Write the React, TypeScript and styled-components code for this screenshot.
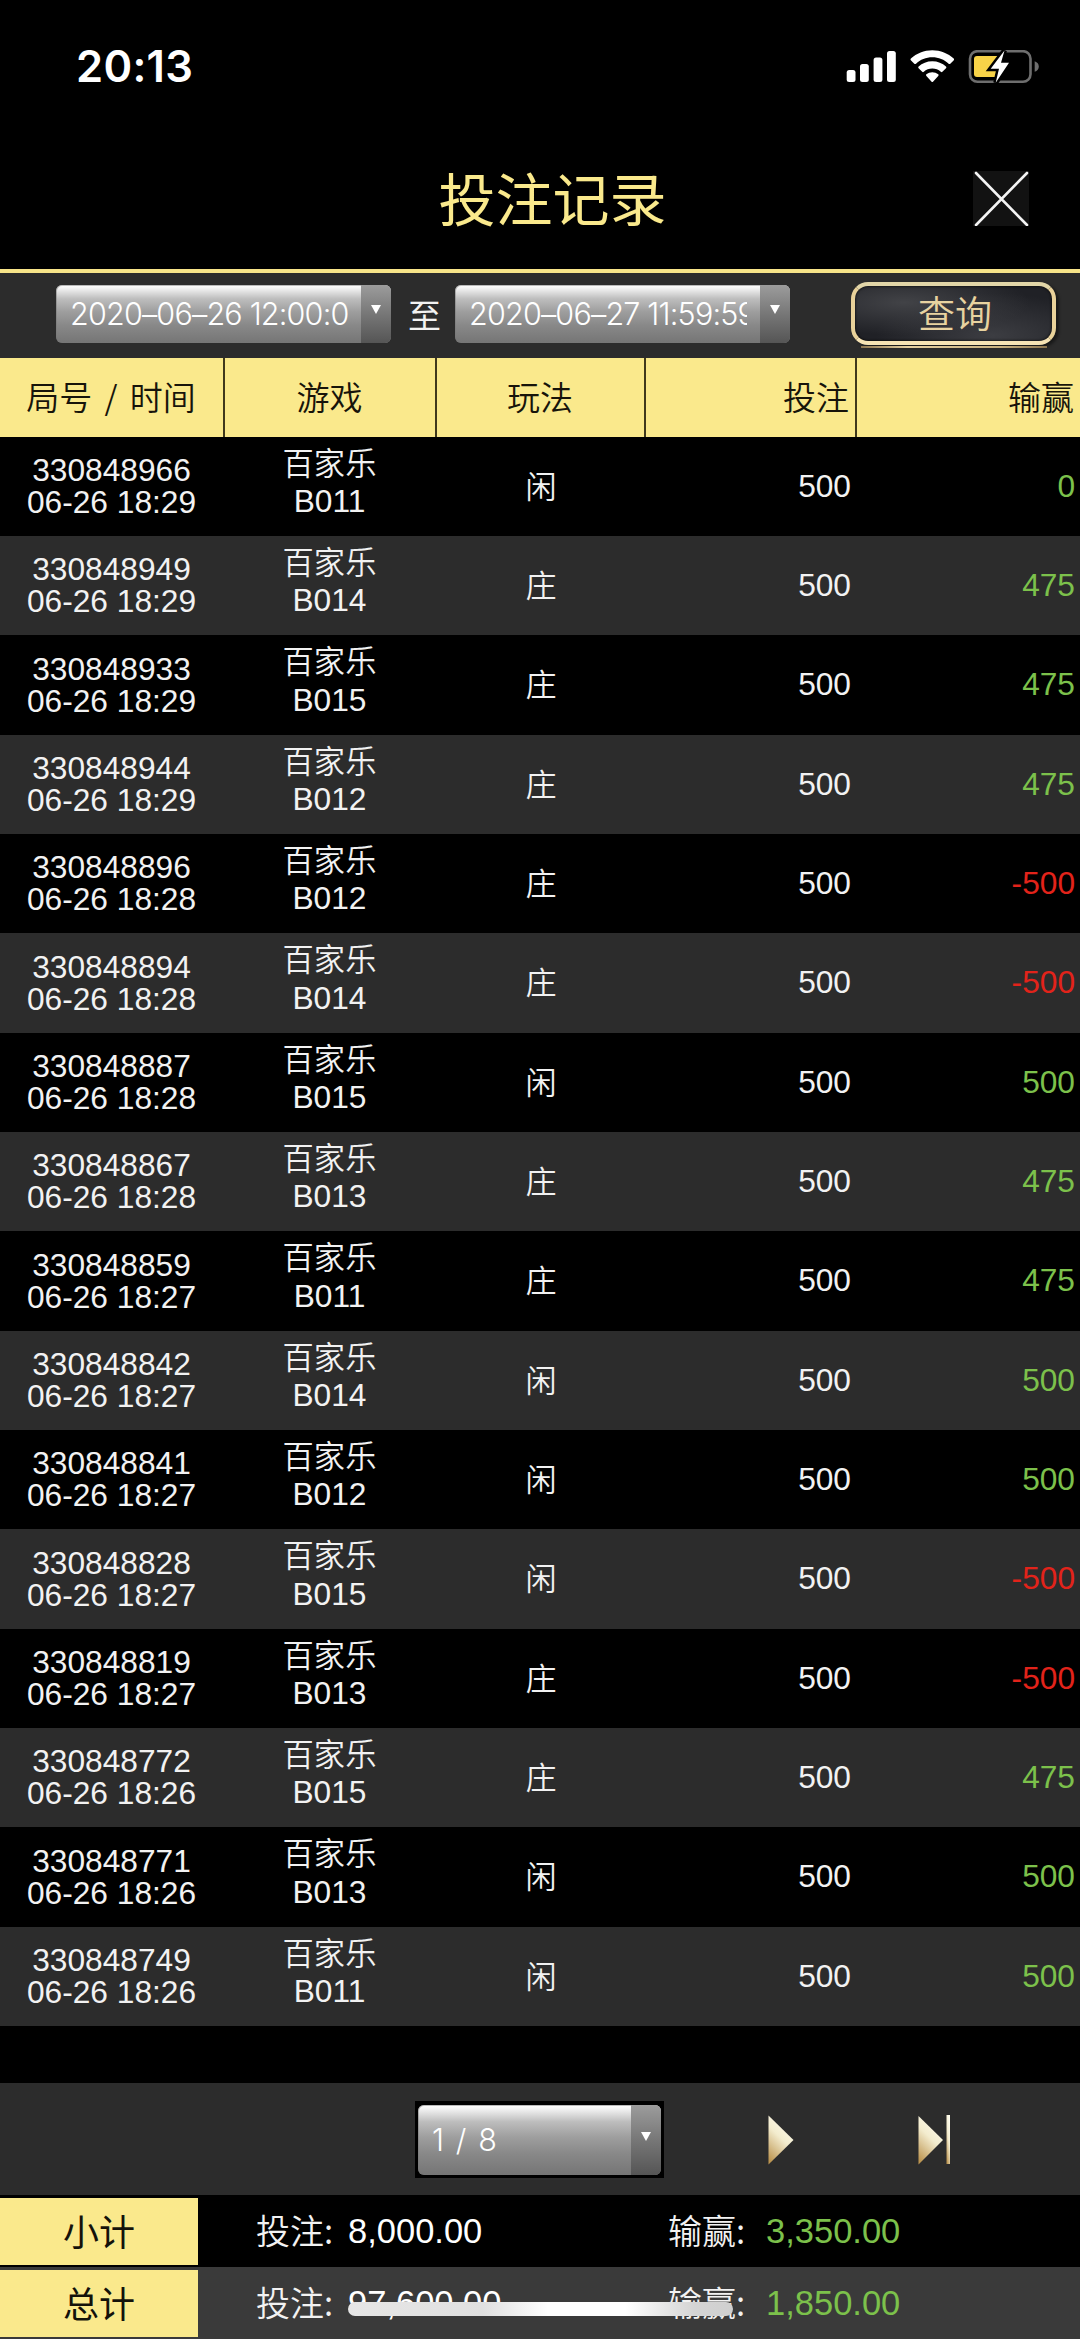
import React from "react";
import styled, { createGlobalStyle } from "styled-components";

const latin = `"Liberation Sans", "Noto Sans CJK SC", sans-serif`;
const cjk = `"Noto Sans CJK SC", "Liberation Sans", sans-serif`;
const gold = "#fae98c";

const GlobalStyle = createGlobalStyle`
  * { box-sizing: border-box; }
  body { margin: 0; background: #000; }
  button { border: 0; padding: 0; background: none; font: inherit; }
`;

const Screen = styled.main`
  position: relative;
  display: flex;
  flex-direction: column;
  width: 1080px;
  height: 2339px;
  overflow: hidden;
  background: #000;
  color: #f2f2f2;
  font-family: ${latin};
`;

const StatusBar = styled.header`
  display: flex;
  align-items: flex-start;
  justify-content: space-between;
  height: 132px;
  padding: 50px 41px 0 76px;
`;

const Clock = styled.span`
  font: 570 43.5px/32px Inter, sans-serif;
  letter-spacing: 0.3px;
  color: #fff;
`;

const StatusIcons = styled.svg`
  width: 193px;
  height: 34px;
`;

const TitleBar = styled.div`
  display: grid;
  grid-template-columns: 1fr auto 1fr;
  align-items: start;
  height: 141px;
  padding: 39px 51px 0;
  border-bottom: 4px solid #f7e489;
`;

const Title = styled.h1`
  grid-column: 2;
  margin: -5px 0 0;
  padding-left: 25px;
  font: 400 57px/60px ${cjk};
  color: ${gold};
`;

const CloseButton = styled.button`
  justify-self: end;
  width: 56px;
  height: 55px;
  background: #121212;
  svg { display: block; }
`;

const FilterBar = styled.section`
  display: flex;
  align-items: flex-start;
  height: 85px;
  padding: 9px 24px 0 56px;
  background: #2c2c2c;
`;

const Select = styled.div<{ $w: number; $h: number; $arrow: number }>`
  display: grid;
  grid-template-columns: 1fr ${(p) => p.$arrow}px;
  width: ${(p) => p.$w}px;
  height: ${(p) => p.$h}px;
  border-radius: 6px;
  overflow: hidden;
  background: linear-gradient(#fff 0%, #f4f4f4 5%, #bdbdbd 24%, #9e9e9e 46%, #888 70%, #757575 100%);
  box-shadow: inset 0 0 0 1px rgba(120, 120, 120, 0.5);
`;

const FilterSelect = styled(Select)`
  margin-top: 3px;
`;

const SelectText = styled.span<{ $clip: number; $pad: number; $spacing: number }>`
  align-self: center;
  width: ${(p) => p.$clip}px;
  margin-left: ${(p) => p.$pad}px;
  overflow: hidden;
  white-space: pre;
  font: 300 30.5px/40px Inter, sans-serif;
  letter-spacing: ${(p) => p.$spacing}px;
  color: #fff;
`;

const SelectArrow = styled.span`
  display: flex;
  justify-content: center;
  background: linear-gradient(#9c9c9c, #777 50%, #555);
  svg { width: 10px; height: 9px; }
`;

const Until = styled.span`
  width: 64px;
  margin-top: 15px;
  padding-left: 3px;
  text-align: center;
  font: 400 33px/34px ${cjk};
`;

const QueryButton = styled.button`
  width: 205px;
  height: 63px;
  padding-left: 3px;
  border: 4px solid #e9d29a;
  border-top-color: #e2d6a8;
  border-bottom-color: #f6e3b4;
  border-radius: 17px;
  background: radial-gradient(ellipse at 25% 30%, #424347, transparent 60%),
    radial-gradient(ellipse at 70% 90%, #3c3d42, transparent 60%), #202126;
  box-shadow: inset 0 0 3px #000, 3px 2px 3px rgba(0, 0, 0, 0.45);
  font: 350 37px/47px ${cjk};
  color: #e8d3a0;
  span { display: block; margin-top: -3px; }
`;

const QueryWrap = styled.div`
  display: flex;
  flex-direction: column;
  align-items: center;
  gap: 1px;
  margin-left: auto;
`;

const QueryShine = styled.span`
  width: 186px;
  height: 2px;
  background: linear-gradient(90deg, #8d7650, #e6d0a0 25%, #c9b17e 75%, #8d7650);
`;

const columns = "225px 212px 209px 211px 1fr";

const TableHead = styled.div`
  display: grid;
  grid-template-columns: ${columns};
  height: 78.5px;
  background: ${gold};
  color: #17140a;
`;

const HeadCell = styled.div<{ $align?: string; $divider?: boolean; $words?: number }>`
  padding-right: ${(p) => (p.$align ? 6 : 1)}px;
  border-right: ${(p) => (p.$divider === false ? 0 : 2)}px solid #40391c;
  text-align: ${(p) => p.$align ?? "center"};
  font: 350 33px/77px ${cjk};
  word-spacing: ${(p) => p.$words ?? 0}px;
  white-space: pre;
`;

const TableBody = styled.div`
  display: grid;
  grid-template-rows: repeat(16, minmax(0, 1fr));
  height: 1589.5px;
`;

const Row = styled.div<{ $alt: boolean }>`
  display: grid;
  grid-template-columns: ${columns};
  background: ${(p) => (p.$alt ? "#2c2c2c" : "#000")};
`;

const StackCell = styled.div`
  display: flex;
  flex-direction: column;
  align-items: center;
  padding: 17.5px 2px 0 0;
  font-size: 31.7px;
  line-height: 32px;
`;

const GameCell = styled(StackCell)`
  padding: 7px 3px 0 0;
`;

const GameName = styled.span`
  font: 350 31.3px/35px ${cjk};
  margin-bottom: 6.5px;
`;

const PlayCell = styled.div`
  padding-right: 1px;
  text-align: center;
  font: 350 31px/96px ${cjk};
`;

const Amount = styled.div<{ $color?: string }>`
  padding-right: 6px;
  text-align: right;
  font-size: 31.7px;
  line-height: 99px;
  color: ${(p) => p.$color ?? "#f2f2f2"};
`;

const WinAmount = styled(Amount)`
  padding-right: 5px;
`;

const Pager = styled.nav`
  display: flex;
  height: 112px;
  margin-top: 57px;
  padding: 18px 0 0 415px;
  background: #2c2c2c;
`;

const PagerFrame = styled.div`
  width: 249px;
  height: 77px;
  padding: 4px 3px;
  background: #000;
`;

const PagerButton = styled.button<{ $gap: number }>`
  height: 50px;
  margin: 14px 0 0 ${(p) => p.$gap}px;
  svg { display: block; }
`;

const SummaryRow = styled.section<{ $bg: string }>`
  display: flex;
  align-items: flex-start;
  height: 72px;
  padding-top: 2.5px;
  background: ${(p) => p.$bg};
`;

const SummaryTag = styled.div`
  width: 198px;
  height: 67px;
  background: ${gold};
  color: #14120a;
  text-align: center;
  font: 400 36px/64px ${cjk};
`;

const SummaryItem = styled.div<{ $w: number; $pad: number; $gap: number }>`
  display: grid;
  grid-template-columns: ${(p) => p.$gap}px 1fr;
  width: ${(p) => p.$w}px;
  margin-left: ${(p) => p.$pad}px;
  font-size: 34.5px;
  line-height: 67px;
  white-space: nowrap;
`;

const SummaryLabel = styled.span`
  font: 350 34px/63px ${cjk};
`;

const SummaryValue = styled.span<{ $win?: boolean }>`
  color: ${(p) => (p.$win ? "#7cc14b" : "#fff")};
`;

const HomeIndicator = styled.div`
  position: absolute;
  left: 348px;
  top: 2302px;
  width: 385px;
  height: 14px;
  border-radius: 7px;
  background: linear-gradient(90deg, #e6e6e6, #e0e0e0 35%, #fff 52%, #fff 72%, #d4d4d4 90%, #cfcfcf);
`;

type Bet = [string, string, string, string, number];

const bets: Bet[] = [
  ["330848966", "18:29", "B011", "闲", 0],
  ["330848949", "18:29", "B014", "庄", 475],
  ["330848933", "18:29", "B015", "庄", 475],
  ["330848944", "18:29", "B012", "庄", 475],
  ["330848896", "18:28", "B012", "庄", -500],
  ["330848894", "18:28", "B014", "庄", -500],
  ["330848887", "18:28", "B015", "闲", 500],
  ["330848867", "18:28", "B013", "庄", 475],
  ["330848859", "18:27", "B011", "庄", 475],
  ["330848842", "18:27", "B014", "闲", 500],
  ["330848841", "18:27", "B012", "闲", 500],
  ["330848828", "18:27", "B015", "闲", -500],
  ["330848819", "18:27", "B013", "庄", -500],
  ["330848772", "18:26", "B015", "庄", 475],
  ["330848771", "18:26", "B013", "闲", 500],
  ["330848749", "18:26", "B011", "闲", 500],
];

const Arrow = ({ top }: { top: number }) => (
  <SelectArrow style={{ paddingTop: top }}>
    <svg viewBox="0 0 10 9"><path d="M0 0h10L5 9z" fill="#fff" /></svg>
  </SelectArrow>
);

const Gradient = ({ id }: { id: string }) => (
  <linearGradient id={id} x1="0.7" y1="0" x2="0.2" y2="1">
    <stop offset="0" stopColor="#fffdf0" />
    <stop offset="0.45" stopColor="#f3ecce" />
    <stop offset="1" stopColor="#bd9550" />
  </linearGradient>
);

const Summary = ({ tag, bet, win, bg }: { tag: string; bet: string; win: string; bg: string }) => (
  <SummaryRow $bg={bg}>
    <SummaryTag>{tag}</SummaryTag>
    <SummaryItem $w={411} $pad={58} $gap={92}>
      <SummaryLabel>投注:</SummaryLabel>
      <SummaryValue>{bet}</SummaryValue>
    </SummaryItem>
    <SummaryItem $w={240} $pad={1} $gap={98}>
      <SummaryLabel>输赢:</SummaryLabel>
      <SummaryValue $win>{win}</SummaryValue>
    </SummaryItem>
  </SummaryRow>
);

export default function App() {
  return (
    <>
      <GlobalStyle />
      <Screen>
        <StatusBar>
          <Clock>20:13</Clock>
          <StatusIcons viewBox="846 50 193 34">
            <g fill="#fff">
              <rect x="846.7" y="70" width="8.8" height="12" rx="2.5" />
              <rect x="860" y="64" width="8.8" height="18" rx="2.5" />
              <rect x="873.6" y="57.5" width="8.8" height="24.5" rx="2.5" />
              <rect x="887" y="51" width="8.8" height="31" rx="2.5" />
              <path d="M932.3 50.2c-8.2 0-15.8 3.1-21.4 8.3-.5.5-.5 1.2-.1 1.7l3.5 3.5c.5.5 1.2.5 1.7 0 4.3-4 10-6.4 16.3-6.4s12 2.4 16.3 6.4c.5.5 1.2.5 1.7 0l3.5-3.5c.4-.5.4-1.2-.1-1.7-5.6-5.2-13.2-8.3-21.4-8.3z" />
              <path d="M932.3 61.2c-5.3 0-10.1 2-13.7 5.3-.5.5-.5 1.2 0 1.7l3.6 3.6c.5.5 1.1.5 1.6 0 2.3-2 5.3-3.2 8.5-3.2s6.2 1.2 8.5 3.2c.5.5 1.1.5 1.6 0l3.6-3.6c.5-.5.5-1.2 0-1.7-3.6-3.3-8.4-5.3-13.7-5.3z" />
              <path d="M932.3 72.2c-2.2 0-4.3.8-5.9 2.1-.5.4-.5 1.1 0 1.6l5.2 5.9c.4.4 1 .4 1.4 0l5.2-5.9c.5-.5.5-1.2 0-1.6-1.6-1.3-3.7-2.1-5.9-2.1z" />
            </g>
            <rect x="970" y="51.2" width="60.5" height="30.6" rx="7.5" fill="none" stroke="#6e6e6e" strokeWidth="2.6" />
            <path d="M1034.7 61.2c2.7 1 4.1 2.9 4.1 5.3s-1.4 4.3-4.1 5.3z" fill="#6e6e6e" />
            <path d="M977 56h22l-3.5 21H977a3 3 0 0 1-3-3V59a3 3 0 0 1 3-3z" fill="#f8d348" />
            <path d="M1004.5 50.5l-3.5 12.3h8l-13.3 20 3.3-14h-8.3z" fill="#fff" stroke="#000" strokeWidth="5" paintOrder="stroke" />
          </StatusIcons>
        </StatusBar>

        <TitleBar>
          <Title>投注记录</Title>
          <CloseButton aria-label="close">
            <svg width="56" height="55" viewBox="0 0 56 55">
              <path d="M3 2l51 52M54 2L3 54" stroke="#f4f4f4" strokeWidth="2.6" strokeLinecap="round" />
            </svg>
          </CloseButton>
        </TitleBar>

        <FilterBar>
          <FilterSelect $w={335} $h={58} $arrow={30}>
            <SelectText $clip={284} $pad={14} $spacing={-0.8}>2020–06–26 12:00:0</SelectText>
            <Arrow top={20} />
          </FilterSelect>
          <Until>至</Until>
          <FilterSelect $w={335} $h={58} $arrow={30}>
            <SelectText $clip={278} $pad={14} $spacing={-0.8}>2020–06–27 11:59:59</SelectText>
            <Arrow top={20} />
          </FilterSelect>
          <QueryWrap>
            <QueryButton><span>查询</span></QueryButton>
            <QueryShine />
          </QueryWrap>
        </FilterBar>

        <TableHead>
          <HeadCell $words={5}>局号 / 时间</HeadCell>
          <HeadCell>游戏</HeadCell>
          <HeadCell>玩法</HeadCell>
          <HeadCell $align="right">投注</HeadCell>
          <HeadCell $align="right" $divider={false}>输赢</HeadCell>
        </TableHead>

        <TableBody>
          {bets.map(([id, time, table, play, win], i) => (
            <Row key={id} $alt={i % 2 === 1}>
              <StackCell>
                <span>{id}</span>
                <span>06-26 {time}</span>
              </StackCell>
              <GameCell>
                <GameName>百家乐</GameName>
                <span>{table}</span>
              </GameCell>
              <PlayCell>{play}</PlayCell>
              <Amount>500</Amount>
              <WinAmount $color={win < 0 ? "#e2231a" : "#7cc14b"}>{win}</WinAmount>
            </Row>
          ))}
        </TableBody>

        <Pager>
          <PagerFrame>
            <Select $w={243} $h={70} $arrow={30}>
              <SelectText $clip={160} $pad={14} $spacing={1.6}>1 / 8</SelectText>
              <Arrow top={27} />
            </Select>
          </PagerFrame>
          <PagerButton $gap={104} aria-label="next">
            <svg width="26" height="50" viewBox="0 0 26 50">
              <defs><Gradient id="next" /></defs>
              <path d="M0.5 0.5L25.5 25L0.5 49.5z" fill="url(#next)" />
            </svg>
          </PagerButton>
          <PagerButton $gap={124} aria-label="last">
            <svg width="33" height="50" viewBox="0 0 33 50">
              <defs><Gradient id="last" /></defs>
              <path d="M0.5 1L25 25L0.5 49.5z" fill="url(#last)" />
              <rect x="28.5" y="0" width="3.5" height="49" fill="url(#last)" />
            </svg>
          </PagerButton>
        </Pager>

        <Summary tag="小计" bet="8,000.00" win="3,350.00" bg="#000" />
        <Summary tag="总计" bet="97,600.00" win="1,850.00" bg="#3a3a3a" />
        <HomeIndicator />
      </Screen>
    </>
  );
}
